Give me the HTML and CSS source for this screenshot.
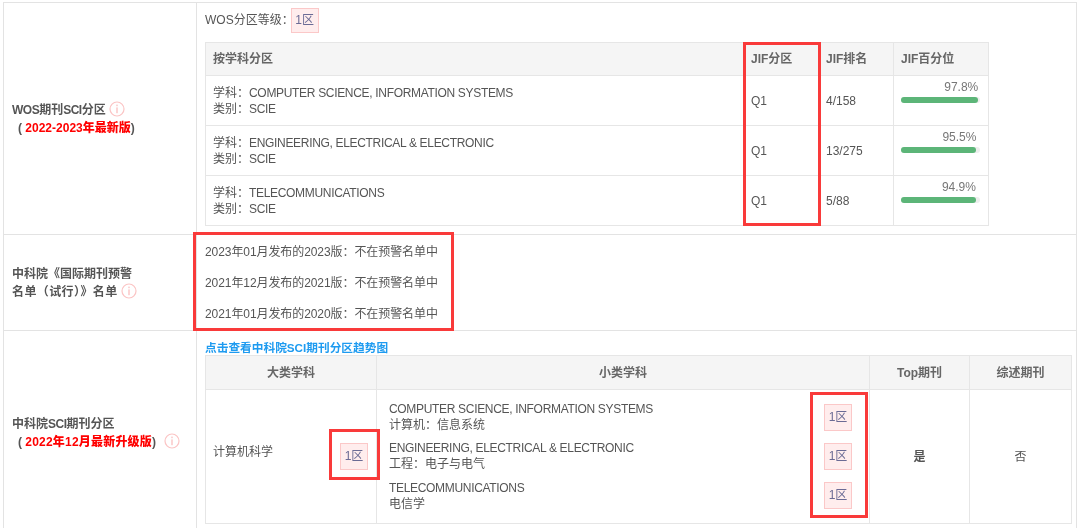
FILE: index.html
```html
<!DOCTYPE html>
<html lang="zh">
<head>
<meta charset="utf-8">
<title>WOS期刊SCI分区</title>
<link rel="stylesheet" href="styles.css">
</head>
<body>
<svg class="defs" width="0" height="0" aria-hidden="true"><symbol id="info" viewBox="0 0 16 16"><circle cx="8" cy="8" r="7" fill="#fff" stroke="#fbc4c4" stroke-width="1.2"/><rect x="7.3" y="3.6" width="1.4" height="1.6" fill="#fbc4c4"/><rect x="7.3" y="6.4" width="1.4" height="5.8" fill="#fbc4c4"/></symbol></svg>
<main class="page">
  <section class="row row-wos">
    <div class="label">
      <div class="label-line"><span class="tight">WOS</span>期刊<span class="tight">SCI</span>分区<svg class="info"><use href="#info"/></svg></div>
      <div class="label-line indent">( <b class="red">2022-2023年最新版</b>)</div>
    </div>
    <div class="content">
      <div class="level">WOS分区等级：<span class="tag tag-small">1区</span></div>
      <table class="grid wos-table">
        <colgroup><col class="c-subject"><col class="c-jif"><col class="c-rank"><col class="c-pct"></colgroup>
        <thead><tr><th>按学科分区</th><th>JIF分区</th><th>JIF排名</th><th>JIF百分位</th></tr></thead>
        <tbody>
          <tr><td>学科：<span class="en">COMPUTER SCIENCE, INFORMATION SYSTEMS</span><br>类别：<span class="en">SCIE</span></td><td>Q1</td><td>4/158</td><td class="pct"><div class="pct-num" style="width:97.8%">97.8%</div><div class="bar"><div class="fill" style="width:97.8%"></div></div></td></tr>
          <tr><td>学科：<span class="en">ENGINEERING, ELECTRICAL &amp; ELECTRONIC</span><br>类别：<span class="en">SCIE</span></td><td>Q1</td><td>13/275</td><td class="pct"><div class="pct-num" style="width:95.5%">95.5%</div><div class="bar"><div class="fill" style="width:95.5%"></div></div></td></tr>
          <tr><td>学科：<span class="en">TELECOMMUNICATIONS</span><br>类别：<span class="en">SCIE</span></td><td>Q1</td><td>5/88</td><td class="pct"><div class="pct-num" style="width:94.9%">94.9%</div><div class="bar"><div class="fill" style="width:94.9%"></div></div></td></tr>
        </tbody>
      </table>
    </div>
  </section>
  <section class="row row-warn">
    <div class="label">
      <div class="label-line">中科院《国际期刊预警</div>
      <div class="label-line"><span class="wide">名单（试行）》名单</span><svg class="info"><use href="#info"/></svg></div>
    </div>
    <div class="content warn-list">
      <p>2023年01月发布的2023版：不在预警名单中</p>
      <p>2021年12月发布的2021版：不在预警名单中</p>
      <p>2021年01月发布的2020版：不在预警名单中</p>
    </div>
  </section>
  <section class="row row-cas">
    <div class="label">
      <div class="label-line">中科院<span class="tight">SCI</span>期刊分区</div>
      <div class="label-line indent">( <b class="red red-wide">2022年12月最新升级版</b>)<svg class="info info-far"><use href="#info"/></svg></div>
    </div>
    <div class="content">
      <a class="trend">点击查看中科院SCI期刊分区趋势图</a>
      <table class="grid cas-table">
        <colgroup><col class="c-major"><col class="c-minor"><col class="c-top"><col class="c-review"></colgroup>
        <thead><tr><th class="center">大类学科</th><th class="center">小类学科</th><th class="center">Top期刊</th><th class="center">综述期刊</th></tr></thead>
        <tbody>
          <tr>
            <td class="major"><div class="major-row"><span class="major-name">计算机科学</span><span class="tag tag-box">1区</span></div></td>
            <td class="minor">
              <div class="minor-row"><div><span class="en">COMPUTER SCIENCE, INFORMATION SYSTEMS</span><br>计算机：信息系统</div><span class="tag tag-box">1区</span></div>
              <div class="minor-row"><div><span class="en">ENGINEERING, ELECTRICAL &amp; ELECTRONIC</span><br>工程：电子与电气</div><span class="tag tag-box">1区</span></div>
              <div class="minor-row"><div><span class="en">TELECOMMUNICATIONS</span><br>电信学</div><span class="tag tag-box">1区</span></div>
            </td>
            <td class="center yes">是</td>
            <td class="center">否</td>
          </tr>
        </tbody>
      </table>
    </div>
  </section>
</main>
<div class="mark mark-jif"></div>
<div class="mark mark-warn"></div>
<div class="mark mark-major"></div>
<div class="mark mark-minor"></div>
</body>
</html>
```

FILE: styles.css
```css
* { box-sizing: border-box; }
html, body { margin: 0; padding: 0; background: #fff; }
body {
  width: 1080px; height: 528px; overflow: hidden; position: relative;
  font: 12px/16px "Liberation Sans", "Noto Sans CJK SC", sans-serif;
  color: #555;
}
.defs { position: absolute; }
.page { padding: 2px 3px 0 3px; filter: blur(0.3px); }
.row {
  display: grid; grid-template-columns: 193px 1fr;
  border: 1px solid #e3e3e3; border-bottom: 0; width: 1074px;
}
.row-wos { height: 232px; }
.row-warn { height: 96px; }
.row-cas { height: 210px; }
.label {
  border-right: 1px solid #e3e3e3; padding-left: 8px;
  display: flex; flex-direction: column; justify-content: center;
  font-weight: bold; color: #555;
}
.label-line { line-height: 18px; white-space: nowrap; }
.indent { padding-left: 6px; }
.red { color: #f00; }
.red-wide { letter-spacing: 0.2px; }
.tight { letter-spacing: -0.5px; }
.en { letter-spacing: -0.32px; }
.wide { letter-spacing: 0.4px; }
.info { width: 16px; height: 16px; vertical-align: -3px; margin-left: 3px; }
.info-far { margin-left: 8px; }
.row-wos .label { padding-top: 1px; }
.row-cas .label { padding-top: 0; padding-bottom: 6px; }
.content { padding-left: 8px; }
.level { height: 39px; padding-top: 6px; line-height: 22px; }
.tag {
  display: inline-block; background: #ffeded; border: 1px solid #fbc8c8;
  color: #6b6b95; text-align: center;
}
.tag-small { width: 28px; height: 25px; line-height: 23px; margin-left: -3px; vertical-align: top; margin-top: -1px; }
.tag-box { width: 28px; height: 27px; line-height: 25px; flex: none; }
.grid { border-collapse: collapse; table-layout: fixed; }
.grid th, .grid td { border: 1px solid #e6e6e6; padding: 0 7px; text-align: left; }
.grid th { background: #f5f5f5; height: 34px; font-weight: bold; color: #666; }
.grid .center { text-align: center; }
.wos-table { width: 783px; }
.wos-table th { height: 33px; }
.wos-table td { height: 50px; }
.c-subject { width: 538px; } .c-jif { width: 75px; } .c-rank { width: 75px; } .c-pct { width: 95px; }
.wos-table td.pct { vertical-align: top; padding: 4px 8px 0 7px; }
.pct-num { text-align: right; line-height: 14px; color: #777; }
.bar { height: 6px; width: 100%; border-radius: 3px; background: #eee; margin-top: 3px; }
.fill { height: 6px; border-radius: 3px; background: #5cb578; }
.warn-list p { margin: 0; height: 31.3px; line-height: 31px; letter-spacing: -0.08px; }
.warn-list { padding-top: 1.5px; }
.trend { display: block; height: 24px; padding-top: 9px; line-height: 16px; font-weight: bold; font-size: 11.7px; color: #1e9bf0; }
.cas-table { width: 866px; }
.c-major { width: 171px; } .c-minor { width: 493px; } .c-top { width: 100px; } .c-review { width: 102px; }
.cas-table tbody td { height: 134px; }
.cas-table td.major { padding: 0 8px 0 7px; }
.major-row { display: flex; justify-content: space-between; align-items: center; }
.major-name { padding-bottom: 10px; }
.cas-table td.minor { padding: 4px 17px 4px 12px; }
.minor-row { display: flex; justify-content: space-between; align-items: center; height: 39.3px; line-height: 16px; }
.yes { font-weight: bold; }
.mark { position: absolute; border: 3px solid #f93a3a; }
.mark-jif { left: 743px; top: 42px; width: 78px; height: 184px; }
.mark-warn { left: 193px; top: 232px; width: 261px; height: 99px; }
.mark-major { left: 329px; top: 429px; width: 51px; height: 51px; }
.mark-minor { left: 810px; top: 392px; width: 58px; height: 126px; }
```
